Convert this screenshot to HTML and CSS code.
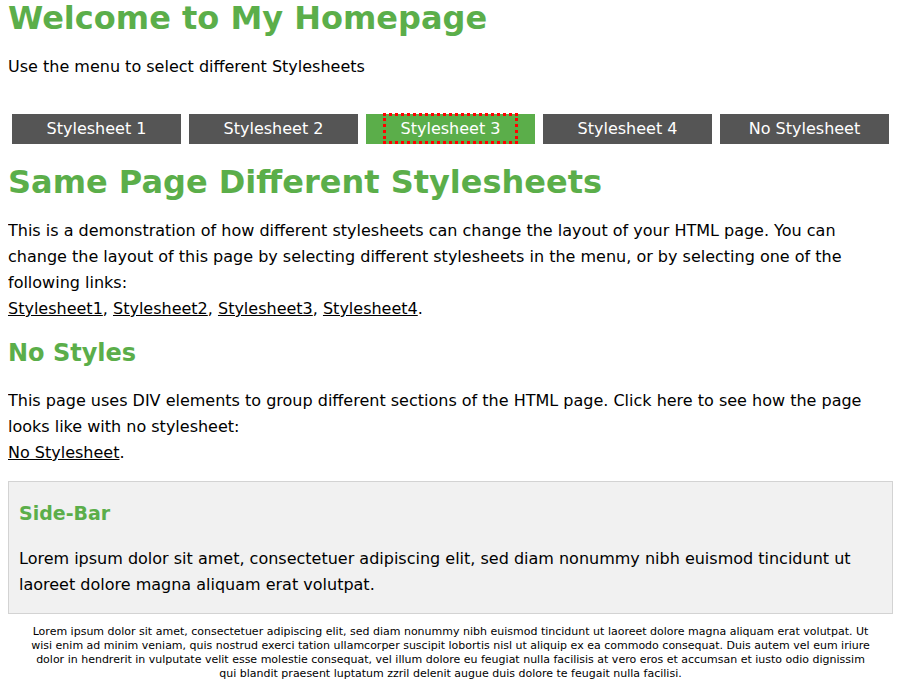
FILE: index.html
```html
<!DOCTYPE html>
<html lang="en">
<head>
<meta charset="utf-8">
<title>Welcome to My Homepage</title>
<link rel="stylesheet" href="styles.css">
</head>
<body>
<header>
<h1>Welcome to My Homepage</h1>
<p>Use the menu to select different Stylesheets</p>
</header>
<nav>
<ul class="menu">
<li><a href="#s1">Stylesheet 1</a></li>
<li><a href="#s2">Stylesheet 2</a></li>
<li class="active"><a href="#s3">Stylesheet 3</a></li>
<li><a href="#s4">Stylesheet 4</a></li>
<li><a href="#none">No Stylesheet</a></li>
</ul>
</nav>
<main>
<h1>Same Page Different Stylesheets</h1>
<p>This is a demonstration of how different stylesheets can change the layout of your HTML page. You can change the layout of this page by selecting different stylesheets in the menu, or by selecting one of the following links:<br>
<a href="#s1">Stylesheet1</a>, <a href="#s2">Stylesheet2</a>, <a href="#s3">Stylesheet3</a>, <a href="#s4">Stylesheet4</a>.</p>
<h2>No Styles</h2>
<p>This page uses DIV elements to group different sections of the HTML page. Click here to see how the page looks like with no stylesheet:<br>
<a href="#none">No Stylesheet</a>.</p>
</main>
<aside class="sidebar">
<h3>Side-Bar</h3>
<p>Lorem ipsum dolor sit amet, consectetuer adipiscing elit, sed diam nonummy nibh euismod tincidunt ut laoreet dolore magna aliquam erat volutpat.</p>
</aside>
<footer>
<p>Lorem ipsum dolor sit amet, consectetuer adipiscing elit, sed diam nonummy nibh euismod tincidunt ut laoreet dolore magna aliquam erat volutpat. Ut wisi enim ad minim veniam, quis nostrud exerci tation ullamcorper suscipit lobortis nisl ut aliquip ex ea commodo consequat. Duis autem vel eum iriure dolor in hendrerit in vulputate velit esse molestie consequat, vel illum dolore eu feugiat nulla facilisis at vero eros et accumsan et iusto odio dignissim qui blandit praesent luptatum zzril delenit augue duis dolore te feugait nulla facilisi.</p>
</footer>
</body>
</html>
```
FILE: styles.css
```css
body {
  margin: 0 8px;
  font-family: Verdana, "DejaVu Sans", sans-serif;
  font-size: 16px;
  line-height: 26px;
  color: #000;
  background: #fff;
}
h1, h2, h3 {
  margin: 0;
  color: #5bae4a;
  font-weight: bold;
}
h1 {
  font-size: 32px;
  line-height: 36px;
}
h2 {
  font-size: 24px;
  line-height: 33px;
}
h3 {
  font-size: 19px;
  line-height: 29px;
}
p {
  margin: 18px 0 15px;
}
a {
  color: inherit;
}
.menu {
  display: flex;
  gap: 8px;
  margin: 34px 4px 20px;
  padding: 0;
  list-style: none;
}
.menu li {
  flex: 1;
  text-align: center;
  line-height: 30px;
  color: #fff;
  background: #555;
}
.menu a {
  text-decoration: none;
}
.menu .active {
  background: #5bae4a;
}
.menu .active a {
  padding: 3px 15px;
  border: 3px dotted #f00;
}
.sidebar {
  padding: 17px 10px 15px;
  border: 1px solid #d3d3d3;
  background: #f1f1f1;
}
.sidebar p {
  margin-bottom: 0;
}
footer p {
  margin: 11px 19px;
  font-size: 11px;
  line-height: 14px;
  text-align: center;
}
```
